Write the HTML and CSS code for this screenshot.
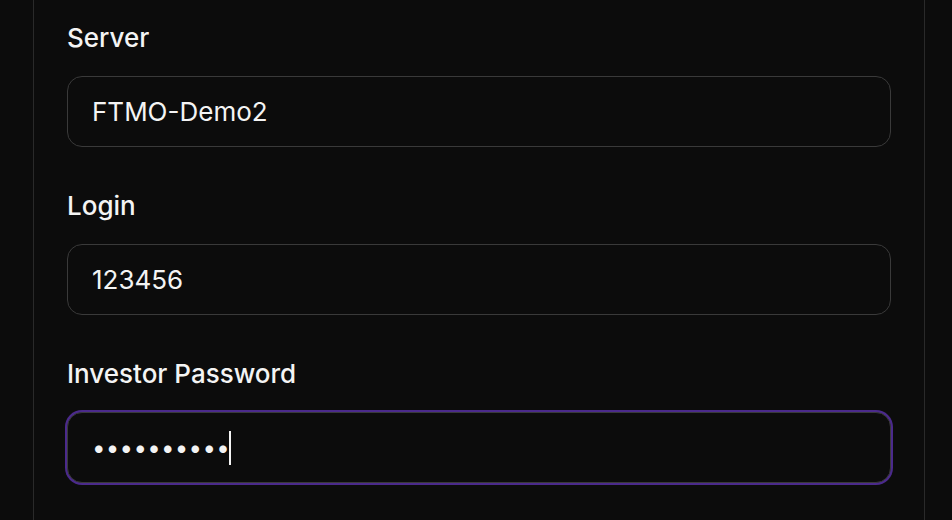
FILE: index.html
```html
<!DOCTYPE html>
<html lang="en">
<head>
<meta charset="utf-8">
<title>Connect account</title>
<link rel="stylesheet" href="styles.css">
</head>
<body>
<div class="panel">
  <form class="form">
    <div class="field">
      <label class="label" for="server">Server</label>
      <input class="input" id="server" type="text" value="FTMO-Demo2">
    </div>
    <div class="field">
      <label class="label" for="login">Login</label>
      <input class="input" id="login" type="text" value="123456">
    </div>
    <div class="field">
      <label class="label">Investor Password</label>
      <div class="input input-focus"><span class="dots">••••••••••</span><span class="caret"></span></div>
    </div>
  </form>
</div>
</body>
</html>
```
FILE: styles.css
```css
html, body {
  margin: 0;
  padding: 0;
  background: #0c0c0c;
  height: 100%;
}
body {
  font-family: Inter, "Noto Sans", sans-serif;
  color: #f2f2f2;
  overflow: hidden;
}
.panel {
  margin-left: 33px;
  width: 824px;
  height: 520px;
  padding: 0 33px;
  border-left: 1px solid #2a2a2a;
  border-right: 1px solid #2a2a2a;
}
.form {
  display: flex;
  flex-direction: column;
  gap: 43px;
  padding-top: 22px;
}
.field {
  display: flex;
  flex-direction: column;
  gap: 22px;
}
.label {
  font-size: 26px;
  line-height: 32px;
  font-weight: 500;
  color: #f4f4f4;
  letter-spacing: 0;
}
.input {
  box-sizing: border-box;
  height: 71px;
  width: 100%;
  margin: 0;
  padding: 0 24px;
  background: #0c0c0c;
  border: 1px solid #3a3a3a;
  border-radius: 15px;
  font-family: Inter, "Noto Sans", sans-serif;
  font-size: 26px;
  color: #f4f4f4;
  outline: none;
}
.input-focus {
  display: flex;
  align-items: center;
  box-shadow: 0 0 0 2px #4b2a8c;
  padding-left: 24px;
}
.dots {
  letter-spacing: 0.3px;
  font-size: 24px;
}
.caret {
  width: 2px;
  height: 34px;
  background: #f4f4f4;
  margin-left: -1px;
}
```
